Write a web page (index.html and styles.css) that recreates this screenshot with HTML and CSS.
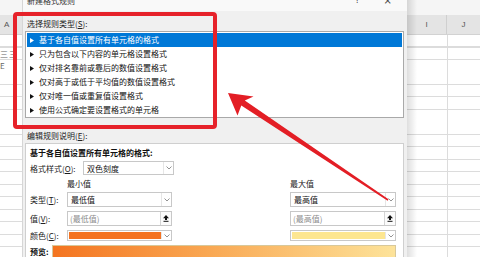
FILE: index.html
```html
<!DOCTYPE html>
<html lang="zh-CN">
<head>
<meta charset="utf-8">
<title>新建格式规则</title>
<link rel="stylesheet" href="styles.css">
</head>
<body>
<div class="screen">
  <div class="xl-left">
    <div class="xl-top"></div>
    <div class="xl-head"><span>A</span></div>
    <div class="xl-rows">
      <div class="xl-row"></div>
      <div class="xl-row cell-text">三三</div>
      <div class="xl-row cell-text">E</div>
    </div>
  </div>

  <div class="dialog">
    <div class="titlebar">
      <span class="title">新建格式规则</span>
      <span class="tb-btn q">?</span>
      <span class="tb-btn x">×</span>
    </div>
    <div class="body">
      <div class="label first">选择规则类型(<u>S</u>):</div>
      <div class="listbox">
        <div class="item selected"><svg class="tri" viewBox="0 0 4 5"><path d="M0 0L4 2.5L0 5Z"/></svg>基于各自值设置所有单元格的格式</div>
        <div class="item"><svg class="tri" viewBox="0 0 4 5"><path d="M0 0L4 2.5L0 5Z"/></svg>只为包含以下内容的单元格设置格式</div>
        <div class="item"><svg class="tri" viewBox="0 0 4 5"><path d="M0 0L4 2.5L0 5Z"/></svg>仅对排名靠前或靠后的数值设置格式</div>
        <div class="item"><svg class="tri" viewBox="0 0 4 5"><path d="M0 0L4 2.5L0 5Z"/></svg>仅对高于或低于平均值的数值设置格式</div>
        <div class="item"><svg class="tri" viewBox="0 0 4 5"><path d="M0 0L4 2.5L0 5Z"/></svg>仅对唯一值或重复值设置格式</div>
        <div class="item"><svg class="tri" viewBox="0 0 4 5"><path d="M0 0L4 2.5L0 5Z"/></svg>使用公式确定要设置格式的单元格</div>
      </div>
      <div class="label second">编辑规则说明(<u>E</u>):</div>
      <div class="panel">
        <div class="heading">基于各自值设置所有单元格的格式:</div>
        <div class="style-row">
          <span class="style-label">格式样式(<u>O</u>):</span>
          <div class="dd style-dd">
            <span class="dd-text">双色刻度</span>
            <span class="dd-btn"><svg viewBox="0 0 6 4"><path d="M0.5 0.5L3 3L5.5 0.5" fill="none" stroke="#777" stroke-width="0.8"/></svg></span>
          </div>
        </div>
        <div class="grid">
          <span></span>
          <span class="col-label">最小值</span>
          <span></span>
          <span class="col-label">最大值</span>

          <span class="row-label">类型(<u>T</u>):</span>
          <div class="dd">
            <span class="dd-text">最低值</span>
            <span class="dd-btn"><svg viewBox="0 0 6 4"><path d="M0.5 0.5L3 3L5.5 0.5" fill="none" stroke="#777" stroke-width="0.8"/></svg></span>
          </div>
          <span></span>
          <div class="dd">
            <span class="dd-text">最高值</span>
            <span class="dd-btn"><svg viewBox="0 0 6 4"><path d="M0.5 0.5L3 3L5.5 0.5" fill="none" stroke="#777" stroke-width="0.8"/></svg></span>
          </div>

          <span class="row-label">值(<u>V</u>):</span>
          <div class="inp">
            <span class="inp-text">(最低值)</span>
            <span class="up-btn"><svg viewBox="0 0 6 7"><path d="M3 0L6 3.2H4V5H2V3.2H0Z" fill="#111"/><rect x="0.5" y="5.8" width="5" height="1" fill="#111"/></svg></span>
          </div>
          <span></span>
          <div class="inp">
            <span class="inp-text">(最高值)</span>
            <span class="up-btn"><svg viewBox="0 0 6 7"><path d="M3 0L6 3.2H4V5H2V3.2H0Z" fill="#111"/><rect x="0.5" y="5.8" width="5" height="1" fill="#111"/></svg></span>
          </div>

          <span class="row-label">颜色(<u>C</u>):</span>
          <div class="dd color-dd">
            <span class="swatch orange"></span>
            <span class="dd-btn"><svg viewBox="0 0 6 4"><path d="M0.5 0.5L3 3L5.5 0.5" fill="none" stroke="#777" stroke-width="0.8"/></svg></span>
          </div>
          <span></span>
          <div class="dd color-dd">
            <span class="swatch yellow"></span>
            <span class="dd-btn"><svg viewBox="0 0 6 4"><path d="M0.5 0.5L3 3L5.5 0.5" fill="none" stroke="#777" stroke-width="0.8"/></svg></span>
          </div>
        </div>
        <div class="preview-row">
          <span class="preview-label">预览:</span>
          <div class="preview-bar"></div>
        </div>
      </div>
    </div>
  </div>

  <div class="xl-right">
    <div class="xl-top"></div>
    <div class="xl-head cols">
      <span class="col-i">I</span>
      <span class="col-j">J</span>
    </div>
    <div class="xl-rows grid-lines"></div>
  </div>

  <div class="highlight"></div>
  <svg class="arrow" viewBox="0 0 480 257" width="480" height="257">
    <polygon points="228,93 253.5,96.5 244.8,100.6 388.5,199.3 387.6,200.7 241.3,105.6 237.5,115.5" fill="#e31e25"/>
  </svg>
</div>
</body>
</html>
```

FILE: styles.css
```css
* { box-sizing: border-box; }

html, body {
  margin: 0;
  padding: 0;
  background: #ffffff;
}

body {
  font-family: "Noto Sans CJK SC", "Noto Sans", sans-serif;
  font-size: 8px;
  color: #1a1a1a;
}

u { text-decoration: underline; text-underline-offset: 1px; }

.screen {
  position: relative;
  width: 480px;
  height: 257px;
  overflow: hidden;
  display: flex;
}

/* ---------- Excel background strips ---------- */
.xl-left {
  width: 22px;
  flex: none;
  display: flex;
  flex-direction: column;
  background: #ffffff;
}

.xl-right {
  flex: 1;
  position: relative;
  display: flex;
  flex-direction: column;
  background: #ffffff;
}

.xl-right::before {
  content: "";
  position: absolute;
  left: 0;
  top: 0;
  bottom: 0;
  width: 10px;
  background: linear-gradient(to right, rgba(0, 0, 0, 0.13), rgba(0, 0, 0, 0));
  z-index: 2;
}

.xl-top {
  height: 15px;
  flex: none;
  background: #f5f5f5;
}

.xl-head {
  height: 20px;
  flex: none;
  background: #e4e4e4;
  border-bottom: 1px solid #d2d2d2;
  display: flex;
  align-items: center;
  color: #555;
  font-family: "Liberation Sans", sans-serif;
  font-size: 8px;
  padding-left: 4px;
}

.xl-head.cols {
  padding-left: 0;
  align-items: stretch;
}

.col-i {
  width: 40px;
  border-right: 1px solid #cfcfcf;
  display: flex;
  align-items: center;
  justify-content: center;
}

.col-j {
  flex: 1;
  display: flex;
  align-items: center;
  justify-content: center;
}

.xl-rows {
  flex: 1;
  background: repeating-linear-gradient(to bottom, #ffffff 0, #ffffff 11.5px, #dcdcdc 11.5px, #dcdcdc 12.5px);
}

.xl-row {
  height: 12.5px;
  line-height: 12.5px;
}

.cell-text {
  color: #666;
  font-size: 8px;
  letter-spacing: 1px;
}

.grid-lines {
  background:
    linear-gradient(to right, transparent 0, transparent 40px, #dcdcdc 40px, #dcdcdc 41px, transparent 41px),
    repeating-linear-gradient(to bottom, #ffffff 0, #ffffff 11.5px, #dcdcdc 11.5px, #dcdcdc 12.5px);
}

/* ---------- Dialog ---------- */
.dialog {
  width: 385px;
  flex: none;
  display: flex;
  flex-direction: column;
  background: #f0f0f0;
  border-left: 1px solid #d6d6d6;
  overflow: hidden;
}

.titlebar {
  height: 11px;
  flex: none;
  background: #f9f9f9;
  display: flex;
  align-items: flex-start;
  padding-left: 4px;
  overflow: hidden;
}

.title {
  margin-top: -4px;
  line-height: 10px;
  color: #333;
}

.tb-btn {
  margin-top: -4px;
  line-height: 10px;
  font-family: "DejaVu Sans", sans-serif;
  font-size: 8px;
  color: #444;
}

.tb-btn.q { margin-left: auto; }
.tb-btn.x { margin-left: 24px; margin-right: 15px; font-size: 10px; }

.body {
  flex: none;
  display: flex;
  flex-direction: column;
  padding: 0 3px 0 2px;
}

.label {
  flex: none;
  line-height: 10px;
  padding-left: 2px;
  color: #222;
}

.label.first { margin-top: 8px; }
.label.second { margin-top: 13px; }

.listbox {
  flex: none;
  margin-top: 2px;
  height: 87px;
  border: 1px solid #a9a9a9;
  background: #ffffff;
  padding: 1px;
}

.item {
  height: 14px;
  line-height: 14px;
  display: flex;
  align-items: center;
  padding-left: 3px;
  color: #111;
}

.item .tri {
  width: 4px;
  height: 5px;
  margin-right: 5px;
  fill: #111;
  flex: none;
}

.item.selected {
  background: #0078d7;
  color: #ffffff;
}

.item.selected .tri { fill: #ffffff; }

.panel {
  flex: none;
  margin-top: 2px;
  height: 140px;
  background: #ffffff;
  border: 1px solid #cfcfcf;
  padding: 4px 0 0 4px;
}

.heading {
  line-height: 10px;
  font-weight: bold;
  color: #111;
}

.style-row {
  margin-top: 3px;
  height: 14px;
  display: flex;
  align-items: center;
}

.style-label {
  width: 53px;
}

.dd {
  display: flex;
  border: 1px solid #c8c8c8;
  background: #ffffff;
  align-items: stretch;
}

.style-dd {
  width: 91px;
  height: 14px;
}

.dd-text {
  flex: 1;
  padding-left: 3px;
  display: flex;
  align-items: center;
  color: #111;
}

.dd-btn {
  width: 10px;
  border-left: 1px solid #e6e6e6;
  display: flex;
  align-items: center;
  justify-content: center;
}

.dd-btn svg {
  width: 6px;
  height: 4px;
}

.grid {
  margin-top: 5px;
  display: grid;
  grid-template-columns: 37px 105px 118px 106px;
  grid-template-rows: 8px 15px 15px 11px;
  row-gap: 4px;
}

.col-label {
  line-height: 8px;
  color: #222;
}

.row-label {
  display: flex;
  align-items: center;
  color: #222;
}

.inp {
  display: flex;
  border: 1px solid #c8c8c8;
  background: #ffffff;
}

.inp-text {
  flex: 1;
  padding-left: 2px;
  display: flex;
  align-items: center;
  color: #8c8c8c;
}

.up-btn {
  width: 11px;
  border-left: 1px solid #d4d4d4;
  background: #fbfbfb;
  display: flex;
  align-items: center;
  justify-content: center;
}

.up-btn svg {
  width: 6px;
  height: 7px;
}

.color-dd {
  padding: 1px 0 1px 1px;
}

.swatch {
  flex: 1;
}

.swatch.orange { background: #f47321; }
.swatch.yellow { background: #fde690; }

.preview-row {
  margin-top: 4px;
  display: flex;
  align-items: flex-start;
}

.preview-label {
  width: 22px;
  line-height: 14px;
  font-weight: bold;
  color: #111;
}

.preview-bar {
  width: 344px;
  height: 22px;
  border: 1px solid #d8c89a;
  background: linear-gradient(to right, #f47420, #f9a752 45%, #fde39a);
}

/* ---------- Annotations ---------- */
.highlight {
  position: absolute;
  left: 13px;
  top: 12px;
  width: 204px;
  height: 117px;
  border: 4px solid #e6222a;
  border-radius: 4px;
  z-index: 5;
}

.arrow {
  position: absolute;
  left: 0;
  top: 0;
  z-index: 6;
  pointer-events: none;
}
```
